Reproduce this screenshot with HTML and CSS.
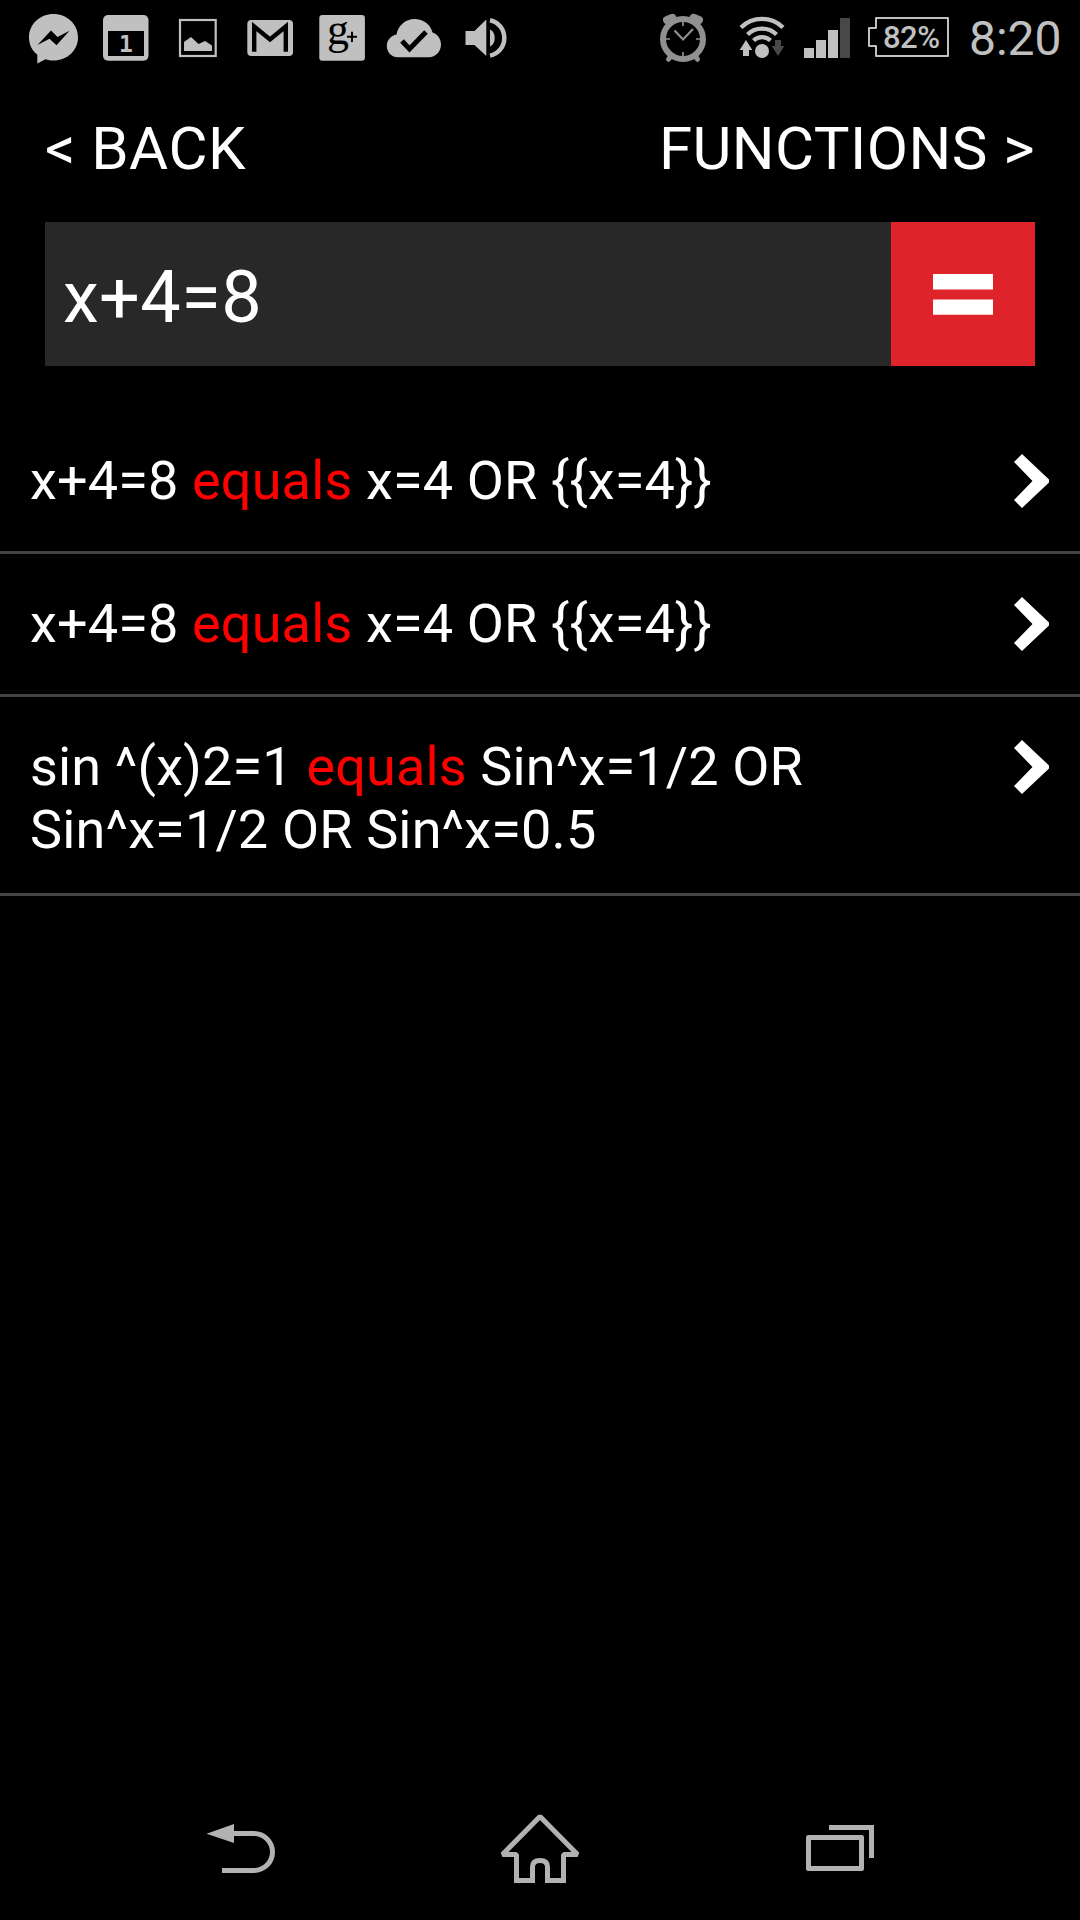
FILE: index.html
```html
<!DOCTYPE html>
<html lang="en">

<head>
    <meta charset="utf-8">
    <title>Equation Solver</title>
    <link rel="stylesheet" href="styles.css">
</head>

<body>
    <div class="statusbar">
        <div class="notifications">
            <!-- messenger -->
            <svg width="72" height="75" viewBox="18 0 72 75">
                <path fill="#c0c0c0" d="M53.500 14C40 14 29 24 29 37.500C29 44.500 32 50.500 37.300 54.600V63.500L45.500 59.200C48 60 51 60.500 53.500 60.500C67 60.500 78 50.500 78 37.500C78 24 67 14 53.500 14Z" />
                <path d="M37.500 45L51 30.500L57.500 37L69.500 30.800L56.500 45.300L49.500 38.700Z" />
            </svg>
            <!-- calendar -->
            <svg width="72" height="75" viewBox="90 0 72 75">
                <rect x="103" y="15" width="45.500" height="45.700" rx="5" fill="#c0c0c0" />
                <rect x="108" y="31" width="36" height="25" />
                <text class="cal-day" x="126" y="52.300">1</text>
            </svg>
            <!-- picture -->
            <svg width="72" height="75" viewBox="162 0 72 75">
                <rect x="180" y="20" width="35.700" height="36" fill="none" stroke="#c0c0c0" stroke-width="2.200" />
                <path fill="#c0c0c0" d="M184 51V42L191 37L198.500 44L205 41L212 45.500V51Z" />
            </svg>
            <!-- gmail -->
            <svg width="72" height="75" viewBox="234 0 72 75">
                <rect x="247.300" y="20" width="45.700" height="36" rx="4" fill="#c0c0c0" />
                <path fill="none" stroke="#000" stroke-width="4.400" d="M254.200 51.700V26.500L270 39.500L285.800 26.500V51.700" />
            </svg>
            <!-- google plus -->
            <svg width="72" height="75" viewBox="306 0 72 75">
                <rect x="319.300" y="15" width="45.600" height="45.700" rx="3" fill="#c0c0c0" />
                <text class="gplus" x="327" y="43.500">g</text>
                <path stroke="#000" stroke-width="2" d="M347 36.800H357M352 31.800V42" />
            </svg>
            <!-- cloud -->
            <svg width="72" height="75" viewBox="378 0 72 75">
                <path fill="#c0c0c0" d="M398 57.300C391.500 57.300 386.800 52 386.800 46C386.800 40 391 35.500 396.500 34.500C398 25.500 405.500 19 414.500 19C423.500 19 430.500 24.500 432.500 32.500C437.500 34 441 39 441 44.500C441 51.500 435.500 57.300 429 57.300Z" />
                <path fill="none" stroke="#000" stroke-width="5" d="M402 41L409.500 49L426 32" />
            </svg>
            <!-- volume -->
            <svg width="72" height="75" viewBox="450 0 72 75">
                <path fill="#c0c0c0" d="M465.500 31H474.500L486.300 19.500V56L474.500 45H465.500Z" />
                <path fill="#c0c0c0" d="M490 29.500A7 9 0 0 1 490 46.500Z" />
                <path fill="none" stroke="#c0c0c0" stroke-width="4.500" d="M490 20.200A17.500 18 0 0 1 490 55.600" />
            </svg>
        </div>

        <div class="system">
            <!-- alarm -->
            <svg width="75" height="75" viewBox="650 0 75 75">
                <g stroke="#909090" fill="none">
                    <path stroke-width="8" stroke-linecap="round" d="M667 20L672.500 17.800M699 20L693.500 17.800" />
                    <path stroke-width="5" stroke-linecap="round" d="M671 56L668.500 59.300M695 56L697.500 59.300" />
                    <circle cx="683" cy="39" r="20" stroke-width="6" fill="#000" />
                    <path stroke-width="1.700" d="M683 22V26M683 52V56M666 39H670M696 39H700" />
                    <path stroke-width="2.200" d="M674.500 30.500L683 39.500L693 29" />
                </g>
            </svg>
            <!-- wifi -->
            <svg width="70" height="75" viewBox="725 0 70 75">
                <g stroke="#c0c0c0" stroke-width="4.300" fill="none">
                    <path d="M741 27.500A30 30 0 0 1 783 27.500" />
                    <path d="M747.500 34.500A21 21 0 0 1 776.500 34.500" />
                    <path d="M753.500 40.500A12.500 12.500 0 0 1 770.500 40.500" />
                </g>
                <circle cx="762" cy="51" r="7" fill="#c0c0c0" />
                <path fill="#c0c0c0" d="M746 40L752.300 50H749V56H743V50H739.700Z" />
                <path fill="#484848" d="M778 56L784.300 46H781V40H775V46H771.700Z" />
            </svg>
            <!-- signal -->
            <svg width="65" height="75" viewBox="795 0 65 75">
                <path fill="#c0c0c0" d="M804 48H814V58H804ZM816 40H826V58H816ZM828 30H838V58H828Z" />
                <path fill="#484848" d="M840 18H850V58H840Z" />
            </svg>
            <!-- battery -->
            <svg width="95" height="75" viewBox="860 0 95 75">
                <path fill="none" stroke="#c0c0c0" stroke-width="2" stroke-linejoin="round" d="M876 18H948V56H876V46H869V28H876Z" />
                <text class="battery-level" x="883" y="48">82%</text>
            </svg>
            <span class="time">8:20</span>
        </div>
    </div>

    <div class="topnav">
        <span>&lt; BACK</span>
        <span>FUNCTIONS &gt;</span>
    </div>

    <div class="inputrow">
        <div class="equation">x+4=8</div>
        <div class="solve">
            <svg width="60" height="41" viewBox="0 0 60 41">
                <path fill="#fff" d="M0 0H60V15.500H0ZM0 25.500H60V40.800H0Z" />
            </svg>
        </div>
    </div>

    <div class="history">
        <div class="item">
            <div class="result">x+4=8 <span class="equals">equals</span> x=4 OR {{x=4}}</div>
            <svg class="chevron" width="36" height="54" viewBox="0 0 36 54">
                <path d="M8 0L35 25.500V28.500L8 54L0 46L18.500 27L0 8Z" />
            </svg>
        </div>
        <div class="item">
            <div class="result">x+4=8 <span class="equals">equals</span> x=4 OR {{x=4}}</div>
            <svg class="chevron" width="36" height="54" viewBox="0 0 36 54">
                <path d="M8 0L35 25.500V28.500L8 54L0 46L18.500 27L0 8Z" />
            </svg>
        </div>
        <div class="item">
            <div class="result">sin ^(x)2=1 <span class="equals">equals</span> Sin^x=1/2 OR Sin^x=1/2 OR Sin^x=0.5</div>
            <svg class="chevron" width="36" height="54" viewBox="0 0 36 54">
                <path d="M8 0L35 25.500V28.500L8 54L0 46L18.500 27L0 8Z" />
            </svg>
        </div>
    </div>

    <div class="navbar">
        <!-- back -->
        <svg width="300" height="144" viewBox="90 1776 300 144">
            <path fill="#b2b2b2" d="M206.500 1833.800L234 1824V1843Z" />
            <path fill="none" stroke="#b2b2b2" stroke-width="5" d="M233 1833.500H254A18.500 18.500 0 0 1 254 1870.500H222" />
        </svg>
        <!-- home -->
        <svg width="300" height="144" viewBox="390 1776 300 144">
            <path fill="none" stroke="#b2b2b2" stroke-width="5" stroke-linejoin="bevel" d="M540 1816.500L502.500 1854.500H516.500V1880.500H532.500V1867Q532.500 1860.500 540 1860.500Q547.500 1860.500 547.500 1867V1880.500H563.500V1854.500H577.500Z" />
            <path fill="#b2b2b2" d="M514 1878H519V1883H514ZM561 1878H566V1883H561ZM530 1878H535V1883H530ZM545 1878H550V1883H545Z" />
        </svg>
        <!-- recent apps -->
        <svg width="300" height="144" viewBox="690 1776 300 144">
            <rect x="808.500" y="1837.500" width="53" height="31" fill="none" stroke="#b2b2b2" stroke-width="5" stroke-linejoin="round" />
            <path fill="none" stroke="#b2b2b2" stroke-width="5" d="M829 1827.500H871.500V1858" />
        </svg>
    </div>
</body>

</html>
```
FILE: styles.css
```css
body {
    margin: 0;
    height: 1920px;
    display: flex;
    flex-direction: column;
    overflow: hidden;
    background: #000;
    color: #fff;
    font-family: Roboto, sans-serif;
}

svg {
    display: block;
    flex: none;
}

.statusbar {
    height: 75px;
    padding: 0 18px;
    display: flex;
    justify-content: space-between;
}

.notifications,
.system {
    display: flex;
}

.time {
    width: 93px;
    margin-left: 14px;
    color: #c0c0c0;
    font-size: 48px;
    line-height: 78px;
    white-space: nowrap;
}

.cal-day {
    fill: #c0c0c0;
    font: bold 23px "DejaVu Sans Mono", monospace;
    text-anchor: middle;
}

.gplus {
    font: 44px "Liberation Serif", serif;
}

.battery-level {
    fill: #c0c0c0;
    font-size: 31px;
    font-weight: 500;
    letter-spacing: -0.5px;
}

.topnav {
    height: 147px;
    padding: 0 45px;
    display: flex;
    justify-content: space-between;
    align-items: center;
    font-size: 60px;
    line-height: 70px;
    letter-spacing: 0.45px;
}

.inputrow {
    height: 144px;
    margin: 0 45px;
    display: flex;
}

.equation {
    flex: 1;
    padding-left: 18px;
    background: #282828;
    font-size: 72px;
    line-height: 152px;
    letter-spacing: 0.4px;
}

.solve {
    width: 144px;
    display: flex;
    justify-content: center;
    align-items: center;
    background: #de242a;
}

.history {
    margin-top: 45px;
    flex: 1;
}

.item {
    min-height: 70px;
    padding: 38px 30px 32px;
    display: flex;
    justify-content: space-between;
    border-bottom: 3px solid #444;
}

.item:last-child {
    min-height: 102px;
}

.result {
    width: 860px;
    font-size: 54px;
    line-height: 63px;
    letter-spacing: 0.15px;
}

.equals {
    color: #f00;
}

.chevron {
    margin-top: 5px;
    fill: #fff;
}

.navbar {
    height: 144px;
    padding: 0 90px;
    display: flex;
}
```
